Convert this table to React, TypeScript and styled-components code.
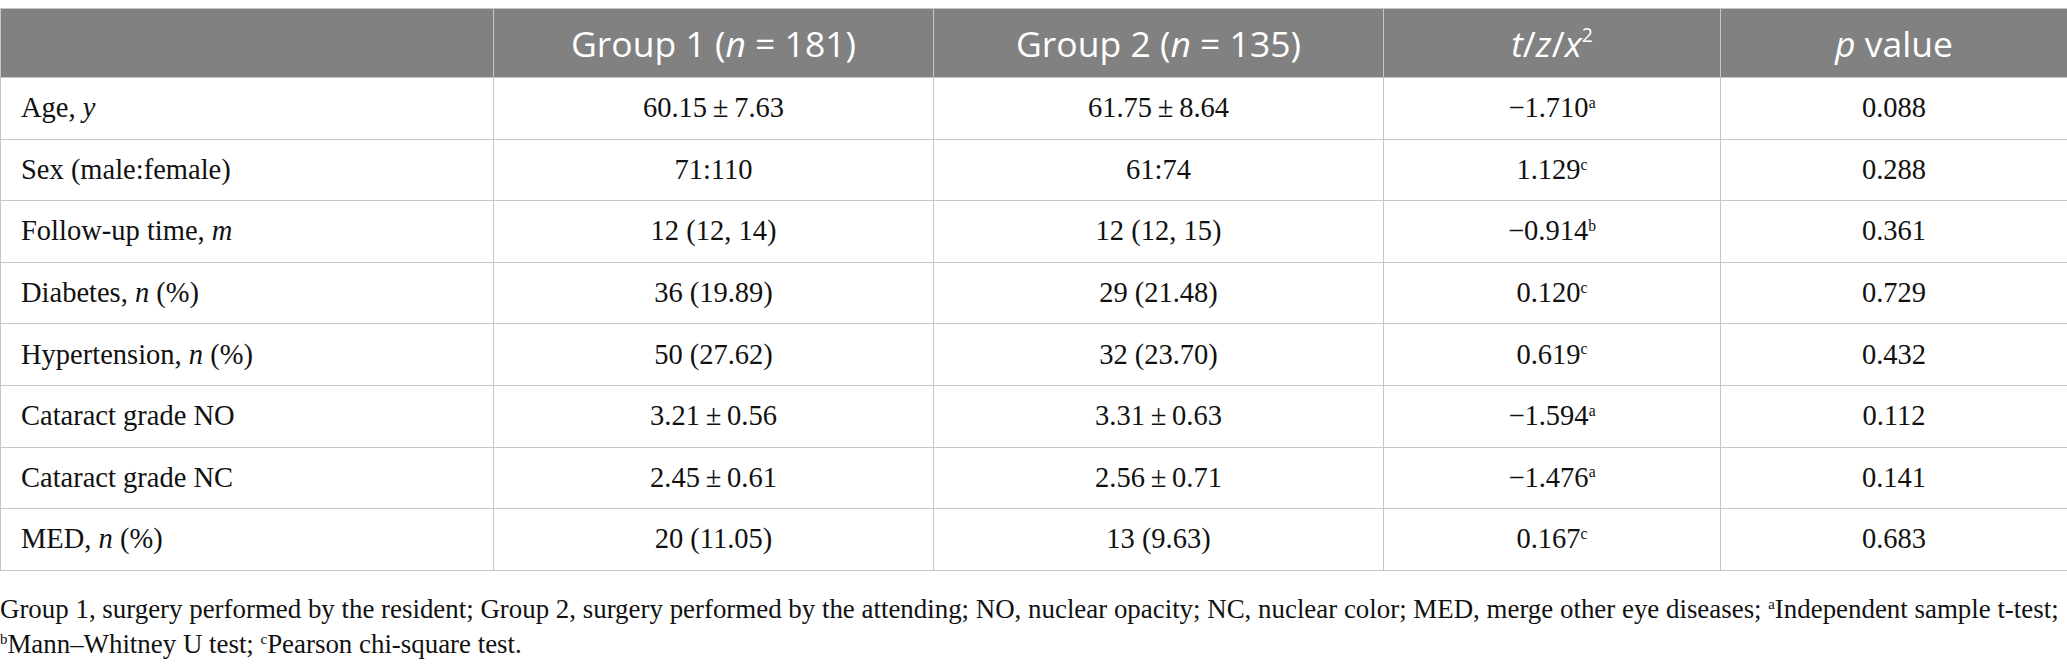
import React from "react";
import styled, { createGlobalStyle } from "styled-components";

const Global = createGlobalStyle`
  html, body { margin: 0; padding: 0; background: #fff; }
  body { padding-top: 8px; }
`;

const Table = styled.table`
  width: 2067px;
  border-collapse: collapse;
  table-layout: fixed;
  font-family: "Liberation Serif", "Times New Roman", serif;
  color: #111;
`;

const HeadCell = styled.th`
  height: 68px;
  padding: 0 12px;
  background: #808180;
  color: #fff;
  font-family: "Open Sans", "Noto Sans", sans-serif;
  font-weight: 400;
  font-size: 35.5px;
  text-align: center;
  border: 1px solid #c6c6c6;
  white-space: nowrap;
`;

const Row = styled.tr`
  height: 61.6px;
`;

const Cell = styled.td<{ $left?: boolean }>`
  padding: 0 ${(p) => (p.$left ? "20px" : "12px")};
  font-size: 28.5px;
  text-align: ${(p) => (p.$left ? "left" : "center")};
  border: 1px solid #c6c6c6;
  white-space: nowrap;
`;

const Sup = styled.sup`
  font-size: 0.55em;
  line-height: 0;
  vertical-align: 0;
  position: relative;
  top: -0.6em;
`;

const HeadSup = styled.sup`
  font-size: 0.55em;
  font-style: normal;
  line-height: 0;
  vertical-align: 0;
  position: relative;
  top: -0.75em;
`;

const Footer = styled.p`
  margin: 21px 0 0 0;
  font-family: "Liberation Serif", "Times New Roman", serif;
  font-size: 26.9px;
  line-height: 35px;
  color: #111;
  white-space: nowrap;
`;

const FootLine = styled.span`
  display: block;
`;

type R = { label: React.ReactNode; g1: string; g2: string; stat: string; sup: string; p: string };

const rows: R[] = [
  { label: <>Age, <i>y</i></>, g1: "60.15\u2009±\u20097.63", g2: "61.75\u2009±\u20098.64", stat: "−1.710", sup: "a", p: "0.088" },
  { label: "Sex (male:female)", g1: "71:110", g2: "61:74", stat: "1.129", sup: "c", p: "0.288" },
  { label: <>Follow-up time, <i>m</i></>, g1: "12 (12, 14)", g2: "12 (12, 15)", stat: "−0.914", sup: "b", p: "0.361" },
  { label: <>Diabetes, <i>n</i> (%)</>, g1: "36 (19.89)", g2: "29 (21.48)", stat: "0.120", sup: "c", p: "0.729" },
  { label: <>Hypertension, <i>n</i> (%)</>, g1: "50 (27.62)", g2: "32 (23.70)", stat: "0.619", sup: "c", p: "0.432" },
  { label: "Cataract grade NO", g1: "3.21\u2009±\u20090.56", g2: "3.31\u2009±\u20090.63", stat: "−1.594", sup: "a", p: "0.112" },
  { label: "Cataract grade NC", g1: "2.45\u2009±\u20090.61", g2: "2.56\u2009±\u20090.71", stat: "−1.476", sup: "a", p: "0.141" },
  { label: <>MED, <i>n</i> (%)</>, g1: "20 (11.05)", g2: "13 (9.63)", stat: "0.167", sup: "c", p: "0.683" },
];

export default function App() {
  return (
    <>
      <Global />
      <Table>
        <colgroup>
          <col style={{ width: 493 }} />
          <col style={{ width: 440 }} />
          <col style={{ width: 450 }} />
          <col style={{ width: 337 }} />
          <col style={{ width: 347 }} />
        </colgroup>
        <thead>
          <tr>
            <HeadCell />
            <HeadCell>Group 1 (<i>n</i> = 181)</HeadCell>
            <HeadCell>Group 2 (<i>n</i> = 135)</HeadCell>
            <HeadCell>
              <i>t</i>/<i>z</i>/<i>x</i>
              <HeadSup>2</HeadSup>
            </HeadCell>
            <HeadCell>
              <i>p</i> value
            </HeadCell>
          </tr>
        </thead>
        <tbody>
          {rows.map((r, i) => (
            <Row key={i}>
              <Cell $left>{r.label}</Cell>
              <Cell>{r.g1}</Cell>
              <Cell>{r.g2}</Cell>
              <Cell>
                {r.stat}
                <Sup>{r.sup}</Sup>
              </Cell>
              <Cell>{r.p}</Cell>
            </Row>
          ))}
        </tbody>
      </Table>
      <Footer>
        <FootLine>
          Group 1, surgery performed by the resident; Group 2, surgery performed by the attending; NO, nuclear
          opacity; NC, nuclear color; MED, merge other eye diseases; <Sup>a</Sup>Independent sample t-test;
        </FootLine>
        <FootLine>
          <Sup>b</Sup>Mann–Whitney U test; <Sup>c</Sup>Pearson chi-square test.
        </FootLine>
      </Footer>
    </>
  );
}
